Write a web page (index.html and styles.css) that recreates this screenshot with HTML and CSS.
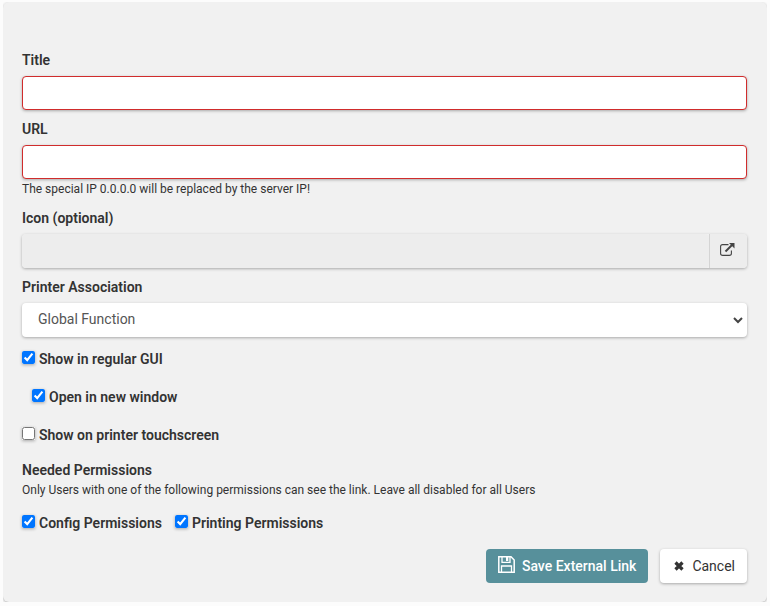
FILE: index.html
```html
<!DOCTYPE html>
<html lang="en">

<head>
  <meta charset="UTF-8">
  <meta name="viewport" content="width=device-width, initial-scale=1.0">
  <title>External Link</title>
  <link rel="stylesheet" href="styles.css">
</head>

<body>
  <form class="well">
    <div class="form-group">
      <label for="linkTitle">Title</label>
      <input type="text" id="linkTitle" class="form-control invalid">
    </div>

    <div class="form-group">
      <label for="linkUrl">URL</label>
      <input type="text" id="linkUrl" class="form-control invalid">
      <p class="help">The special IP 0.0.0.0 will be replaced by the server IP!</p>
    </div>

    <div class="form-group">
      <label for="linkIcon">Icon (optional)</label>
      <div class="input-group">
        <input type="text" id="linkIcon" class="form-control" readonly>
        <button type="button" class="addon" aria-label="Select icon">
          <svg width="15" height="13" viewBox="0 0 15 13">
            <path d="M8.5 1.6H2.6Q.6 1.6 .6 3.6V10.4Q.6 12.4 2.6 12.4H9.4Q11.4 12.4 11.4 10.4V7.5" fill="none" stroke="currentColor" stroke-width="1.1"/>
            <path d="M5.5 8.5L12 2" fill="none" stroke="currentColor" stroke-width="2"/>
            <path d="M9 0H14.5V5.5Z" fill="currentColor"/>
          </svg>
        </button>
      </div>
    </div>

    <div class="form-group">
      <label for="association">Printer Association</label>
      <div class="select-wrap">
        <select id="association" class="form-control">
          <option selected>Global Function</option>
        </select>
        <svg class="caret" width="10" height="7" viewBox="0 0 10 7">
          <path d="M1 1L5 5L9 1" fill="none" stroke="currentColor" stroke-width="2"/>
        </svg>
      </div>
    </div>

    <div class="checks">
      <label class="check"><input type="checkbox" checked>Show in regular GUI</label>
      <label class="check indent"><input type="checkbox" checked>Open in new window</label>
      <label class="check"><input type="checkbox">Show on printer touchscreen</label>
    </div>

    <fieldset>
      <legend>Needed Permissions</legend>
      <p class="help">Only Users with one of the following permissions can see the link. Leave all disabled for all Users</p>
      <div class="permissions">
        <label class="check"><input type="checkbox" checked>Config Permissions</label>
        <label class="check"><input type="checkbox" checked>Printing Permissions</label>
      </div>
    </fieldset>

    <div class="actions">
      <button type="submit" class="btn btn-primary">
        <svg width="17" height="17" viewBox="0 0 17 17">
          <path d="M.8 .8H13L16.2 4V16.2H.8Z" fill="none" stroke="currentColor" stroke-width="1.5"/>
          <path d="M4 1V6.3H12V1M3.5 16V10H13.5V16" fill="none" stroke="currentColor" stroke-width="1.3"/>
          <path d="M8 1H10.3V5H8Z" fill="currentColor"/>
        </svg>
        Save External Link
      </button>
      <button type="button" class="btn btn-default">
        <svg width="10" height="10" viewBox="0 0 10 10">
          <path d="M1.5 1.5L8.5 8.5M8.5 1.5L1.5 8.5" fill="none" stroke="currentColor" stroke-width="3.2"/>
        </svg>
        Cancel
      </button>
    </div>
  </form>
</body>

</html>
```
FILE: styles.css
```css
* {
  box-sizing: border-box;
}

body {
  margin: 2px 3px;
  background-color: #fcfcfc;
  color: #333;
  font-family: Roboto, sans-serif;
  font-size: 14px;
  line-height: 20px;
}

.well {
  padding: 48px 20px 19px 19px;
  background-color: #f1f1f1;
  border-radius: 6px;
  box-shadow: 0 1px 3px rgba(0, 0, 0, 0.3);
}

.form-group {
  margin-bottom: 9px;
}

.form-group label {
  display: block;
  margin-bottom: 6px;
}

label,
legend {
  font-weight: 600;
}

input,
select,
button {
  font: inherit;
  color: inherit;
}

.form-control {
  display: block;
  width: 100%;
  height: 34px;
  padding: 6px 12px;
  border: 0;
  border-radius: 4px;
  background-color: #fff;
  box-shadow: 0 1px 3px rgba(0, 0, 0, 0.3);
}

.form-control.invalid {
  border: 1px solid #d02c2c;
}

.form-control:focus {
  outline: none;
}

.help {
  margin: 0;
  padding: 1px 0;
  font-size: 12px;
  line-height: 18px;
}

.input-group {
  display: flex;
  border-radius: 4px;
  box-shadow: 0 1px 3px rgba(0, 0, 0, 0.3);
}

.input-group .form-control {
  flex: 1;
  background-color: #ededed;
  box-shadow: none;
}

.addon {
  display: flex;
  align-items: center;
  justify-content: center;
  width: 38px;
  padding: 0 2px 4px 0;
  border: 0;
  border-left: 1px solid #d4d4d4;
  border-radius: 0 4px 4px 0;
  background-color: #ededed;
  color: #444;
}

.select-wrap {
  position: relative;
}

select.form-control {
  padding: 5px 16px 7px;
  color: #555;
  appearance: none;
}

.caret {
  position: absolute;
  top: 14px;
  right: 4px;
  color: #444;
  pointer-events: none;
}

.checks {
  display: flex;
  flex-direction: column;
  align-items: flex-start;
  gap: 18px;
  margin: 12px 0 15px;
}

.check {
  display: flex;
  align-items: center;
  gap: 4px;
}

.check input {
  width: 13px;
  height: 13px;
  margin: 0 0 4px;
  border-radius: 3px;
  box-shadow: 0 1px 3px rgba(0, 0, 0, 0.3);
}

.indent {
  margin-left: 10px;
}

fieldset {
  margin: 0;
  padding: 0;
  border: 0;
}

legend {
  padding: 0;
}

.permissions {
  display: flex;
  gap: 13px;
  margin: 13px 0 16px;
}

.actions {
  display: flex;
  justify-content: flex-end;
  gap: 12px;
}

.btn {
  display: flex;
  align-items: center;
  gap: 7px;
  height: 34px;
  padding: 0 12px;
  border: 0;
  border-radius: 4px;
}

.btn-primary {
  background-color: #57909b;
  color: #fff;
  font-weight: 500;
}

.btn-primary svg {
  margin-bottom: 3px;
}

.btn-default {
  gap: 8px;
  padding-left: 14px;
  background-color: #fff;
  box-shadow: 0 1px 3px rgba(0, 0, 0, 0.3);
}
```
